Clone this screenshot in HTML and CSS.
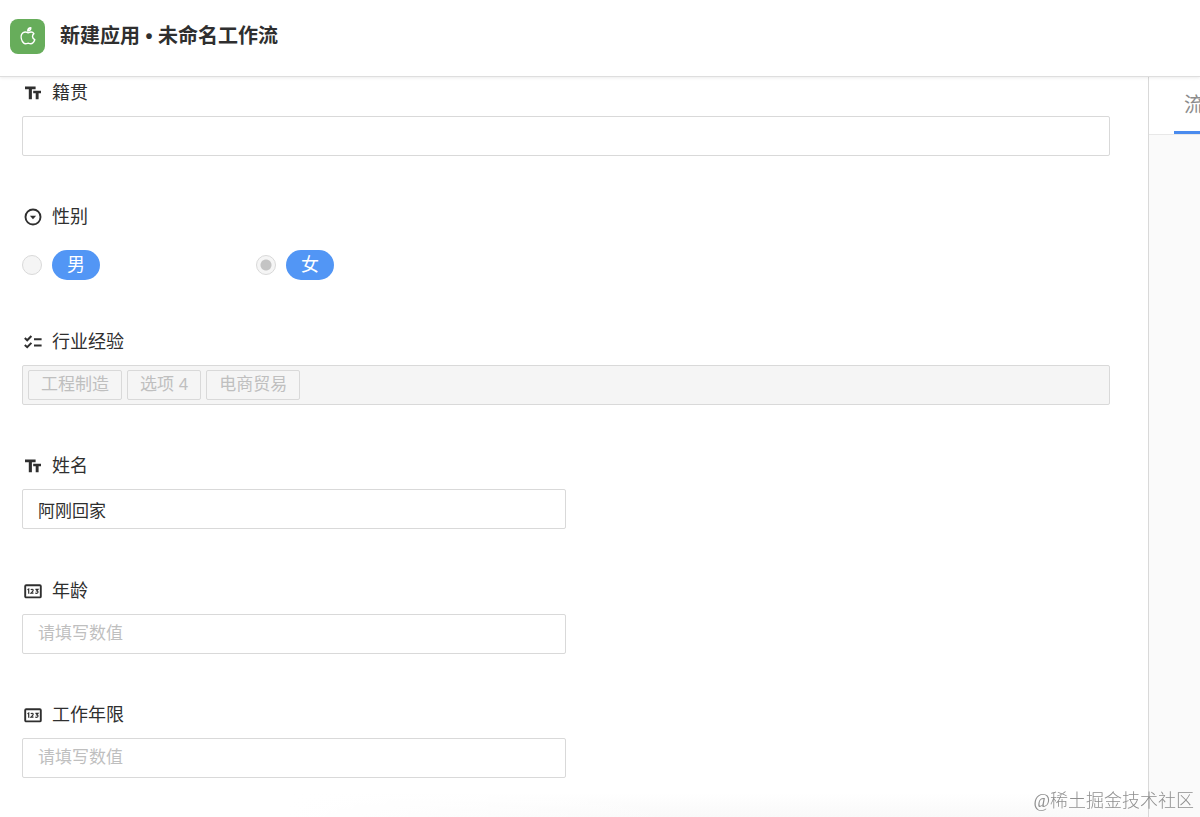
FILE: index.html
```html
<!DOCTYPE html>
<html lang="zh-CN">
<head>
<meta charset="utf-8">
<meta name="viewport" content="width=device-width, initial-scale=1">
<title>新建应用 • 未命名工作流</title>
<link rel="stylesheet" href="styles.css">
</head>
<body>
<svg class="sprite" aria-hidden="true">
  <symbol id="icon-text" viewBox="0 0 18 18">
    <path d="M1 2.600h10.600v2.600H7.900V15.200H4.800V5.200H1z M9.200 6.800h7.800v2.500h-2.400v5.900h-2.900V9.300H9.200z" fill="currentColor"/>
  </symbol>
  <symbol id="icon-number" viewBox="0 0 18 18">
    <rect x="1.200" y="3.200" width="15.600" height="12.200" rx="1" fill="none" stroke="currentColor" stroke-width="1.900"/>
    <path d="M3.500 7.800l1.200-.8v4.700M7 8c.3-1.100 2.300-1 2.200.3 0 1-1.300 1.700-2.300 2.900h2.600M11.400 7.300h2.600l-1.300 1.500c1.900.1 1.700 2.500 0 2.500-.6 0-1.100-.2-1.300-.6" fill="none" stroke="currentColor" stroke-width="1.200"/>
  </symbol>
  <symbol id="icon-select" viewBox="0 0 18 18">
    <circle cx="9" cy="9" r="7.500" fill="none" stroke="currentColor" stroke-width="1.900"/>
    <path d="M5.900 7.700h6.200L9 11.200z" fill="currentColor"/>
  </symbol>
  <symbol id="icon-checks" viewBox="0 0 18 18">
    <path d="M.8 5.100l2.400 2.200 4.200-4.300M.8 12l2.400 2.200 4.200-4.300M10 6.200h7.600M10 12.400h7.600" fill="none" stroke="currentColor" stroke-width="2"/>
  </symbol>
</svg>

<header class="topbar">
  <span class="app-logo">
    <svg viewBox="0 0 18 20" width="16" height="18" fill="none" stroke="currentColor" stroke-width="1.600" stroke-linejoin="round" aria-hidden="true">
      <path d="M15.600 7.300C14.500 5.500 11.800 5.300 9.200 6.400 6.300 5.100 3.200 5.400 1.900 8.100c-1.300 2.800-.2 7.200 2.200 9.800 1.400 1.500 3.100.8 5.100.2 2 .6 3.700 1.300 5.100-.2 1-1.100 1.800-2.400 2.300-3.800-2.900-1.300-3.300-4.800-1-6.800z"/>
      <path d="M8.700 4.400C8.800 2.300 10.200.9 12.200.8 12.200 2.900 10.800 4.300 8.700 4.400z"/>
    </svg>
  </span>
  <h1 class="app-title">新建应用 • 未命名工作流</h1>
</header>

<div class="workspace">
  <main class="content">
    <form class="form">
      <div class="field">
        <label class="field-label" for="origin"><svg class="field-icon"><use href="#icon-text"/></svg>籍贯</label>
        <input class="text-input" id="origin" type="text">
      </div>
      <div class="field" role="radiogroup" aria-labelledby="gender-label">
        <div class="field-label" id="gender-label"><svg class="field-icon"><use href="#icon-select"/></svg>性别</div>
        <div class="radio-row">
          <label class="radio-option"><input class="radio" type="radio" name="gender" disabled><span class="pill">男</span></label>
          <label class="radio-option"><input class="radio" type="radio" name="gender" checked disabled><span class="pill">女</span></label>
        </div>
      </div>
      <div class="field" role="group" aria-labelledby="industry-label">
        <div class="field-label" id="industry-label"><svg class="field-icon"><use href="#icon-checks"/></svg>行业经验</div>
        <ul class="tag-box">
          <li class="tag">工程制造</li>
          <li class="tag">选项 4</li>
          <li class="tag">电商贸易</li>
        </ul>
      </div>
      <div class="field">
        <label class="field-label" for="name"><svg class="field-icon"><use href="#icon-text"/></svg>姓名</label>
        <input class="text-input half" id="name" type="text" value="阿刚回家">
      </div>
      <div class="field">
        <label class="field-label" for="age"><svg class="field-icon"><use href="#icon-number"/></svg>年龄</label>
        <input class="text-input half" id="age" type="text" inputmode="numeric" placeholder="请填写数值">
      </div>
      <div class="field">
        <label class="field-label" for="years"><svg class="field-icon"><use href="#icon-number"/></svg>工作年限</label>
        <input class="text-input half" id="years" type="text" inputmode="numeric" placeholder="请填写数值">
      </div>
    </form>
  </main>
  <aside class="side-panel">
    <div class="tabs"><button class="tab" type="button">流</button></div>
  </aside>
</div>
<div class="watermark">@稀土掘金技术社区</div>
</body>
</html>
```

FILE: styles.css
```css
* {
  box-sizing: border-box;
}

body {
  margin: 0;
  min-height: 100vh;
  display: flex;
  flex-direction: column;
  background: #fff;
  color: #2f2f2f;
  font-family: "Liberation Sans", "Noto Sans CJK SC", sans-serif;
  font-size: 18px;
  line-height: 24px;
}

input,
button {
  font: inherit;
  color: inherit;
}

.sprite {
  display: none;
}

.topbar {
  display: flex;
  align-items: center;
  gap: 15px;
  padding: 17px 10px 21px;
  border-bottom: 1px solid #dedede;
  box-shadow: 0 1px 3px rgba(0, 0, 0, 0.08);
  position: relative;
}

.app-logo {
  display: flex;
  align-items: center;
  justify-content: center;
  width: 35px;
  height: 35px;
  border-radius: 8px;
  background: #67ad5b;
  color: #fff;
}

.app-title {
  margin: 0;
  font-size: 20px;
  font-weight: 700;
  line-height: 38px;
}

.workspace {
  flex: 1;
  display: flex;
}

.content {
  flex: 1;
  min-width: 0;
  display: flex;
  background:
    linear-gradient(to right, #fff 25%, transparent 60%) left bottom / 100% 24px no-repeat,
    linear-gradient(to top, #f9f9f9, #fff) left bottom / 100% 24px no-repeat;
}

.form {
  flex: 1;
  display: flex;
  flex-direction: column;
  justify-content: space-between;
  gap: 24px;
  padding: 4px 38px 39px 22px;
}

.field {
  display: flex;
  flex-direction: column;
  gap: 11px;
}

.field-label {
  display: flex;
  align-items: center;
  gap: 10px;
  padding-left: 2px;
}

.field-icon {
  width: 18px;
  height: 18px;
}

.text-input {
  width: 100%;
  height: 40px;
  padding: 0 15px;
  border: 1px solid #d9d9d9;
  border-radius: 2px;
  background: #fff;
  font-size: 17px;
}

.half {
  width: 50%;
}

.text-input::placeholder {
  color: #bfbfbf;
  opacity: 1;
}

.radio-row {
  display: flex;
  align-items: flex-end;
  height: 40px;
}

.radio-option {
  display: flex;
  align-items: center;
  gap: 10px;
  width: 234px;
}

.radio {
  appearance: none;
  width: 20px;
  height: 20px;
  margin: 0;
  border: 1px solid #d9d9d9;
  border-radius: 50%;
  background: #f5f5f5;
}

.radio:checked {
  background: radial-gradient(circle, #c4c4c4 5px, #f5f5f5 6px);
}

.pill {
  padding: 3px 15px;
  border-radius: 15px;
  background: #5296f5;
  color: #fff;
}

.tag-box {
  display: flex;
  align-items: center;
  gap: 5px;
  height: 40px;
  margin: 0;
  padding: 0 5px;
  border: 1px solid #d9d9d9;
  border-radius: 2px;
  background: #f5f5f5;
  list-style: none;
}

.tag {
  padding: 2px 12px;
  border: 1px solid #d9d9d9;
  border-radius: 2px;
  color: #bfbfbf;
  font-size: 17px;
}

.side-panel {
  width: 52px;
  overflow: hidden;
  border-left: 1px solid #d9d9d9;
  background: #fafafa;
}

.tabs {
  display: flex;
  padding-left: 25px;
  border-bottom: 1px solid #e8e8e8;
  background: #fff;
}

.tab {
  flex: none;
  padding: 16px 10px 14px;
  border: 0;
  border-bottom: 3px solid #4a8bee;
  background: none;
  color: #8c8c8c;
  font-size: 20px;
  line-height: 24px;
}

.watermark {
  position: fixed;
  right: 6px;
  bottom: 4px;
  color: #8f8f8f;
  font-family: "Liberation Serif", "Noto Sans CJK SC", serif;
  font-weight: 300;
  pointer-events: none;
}
```
